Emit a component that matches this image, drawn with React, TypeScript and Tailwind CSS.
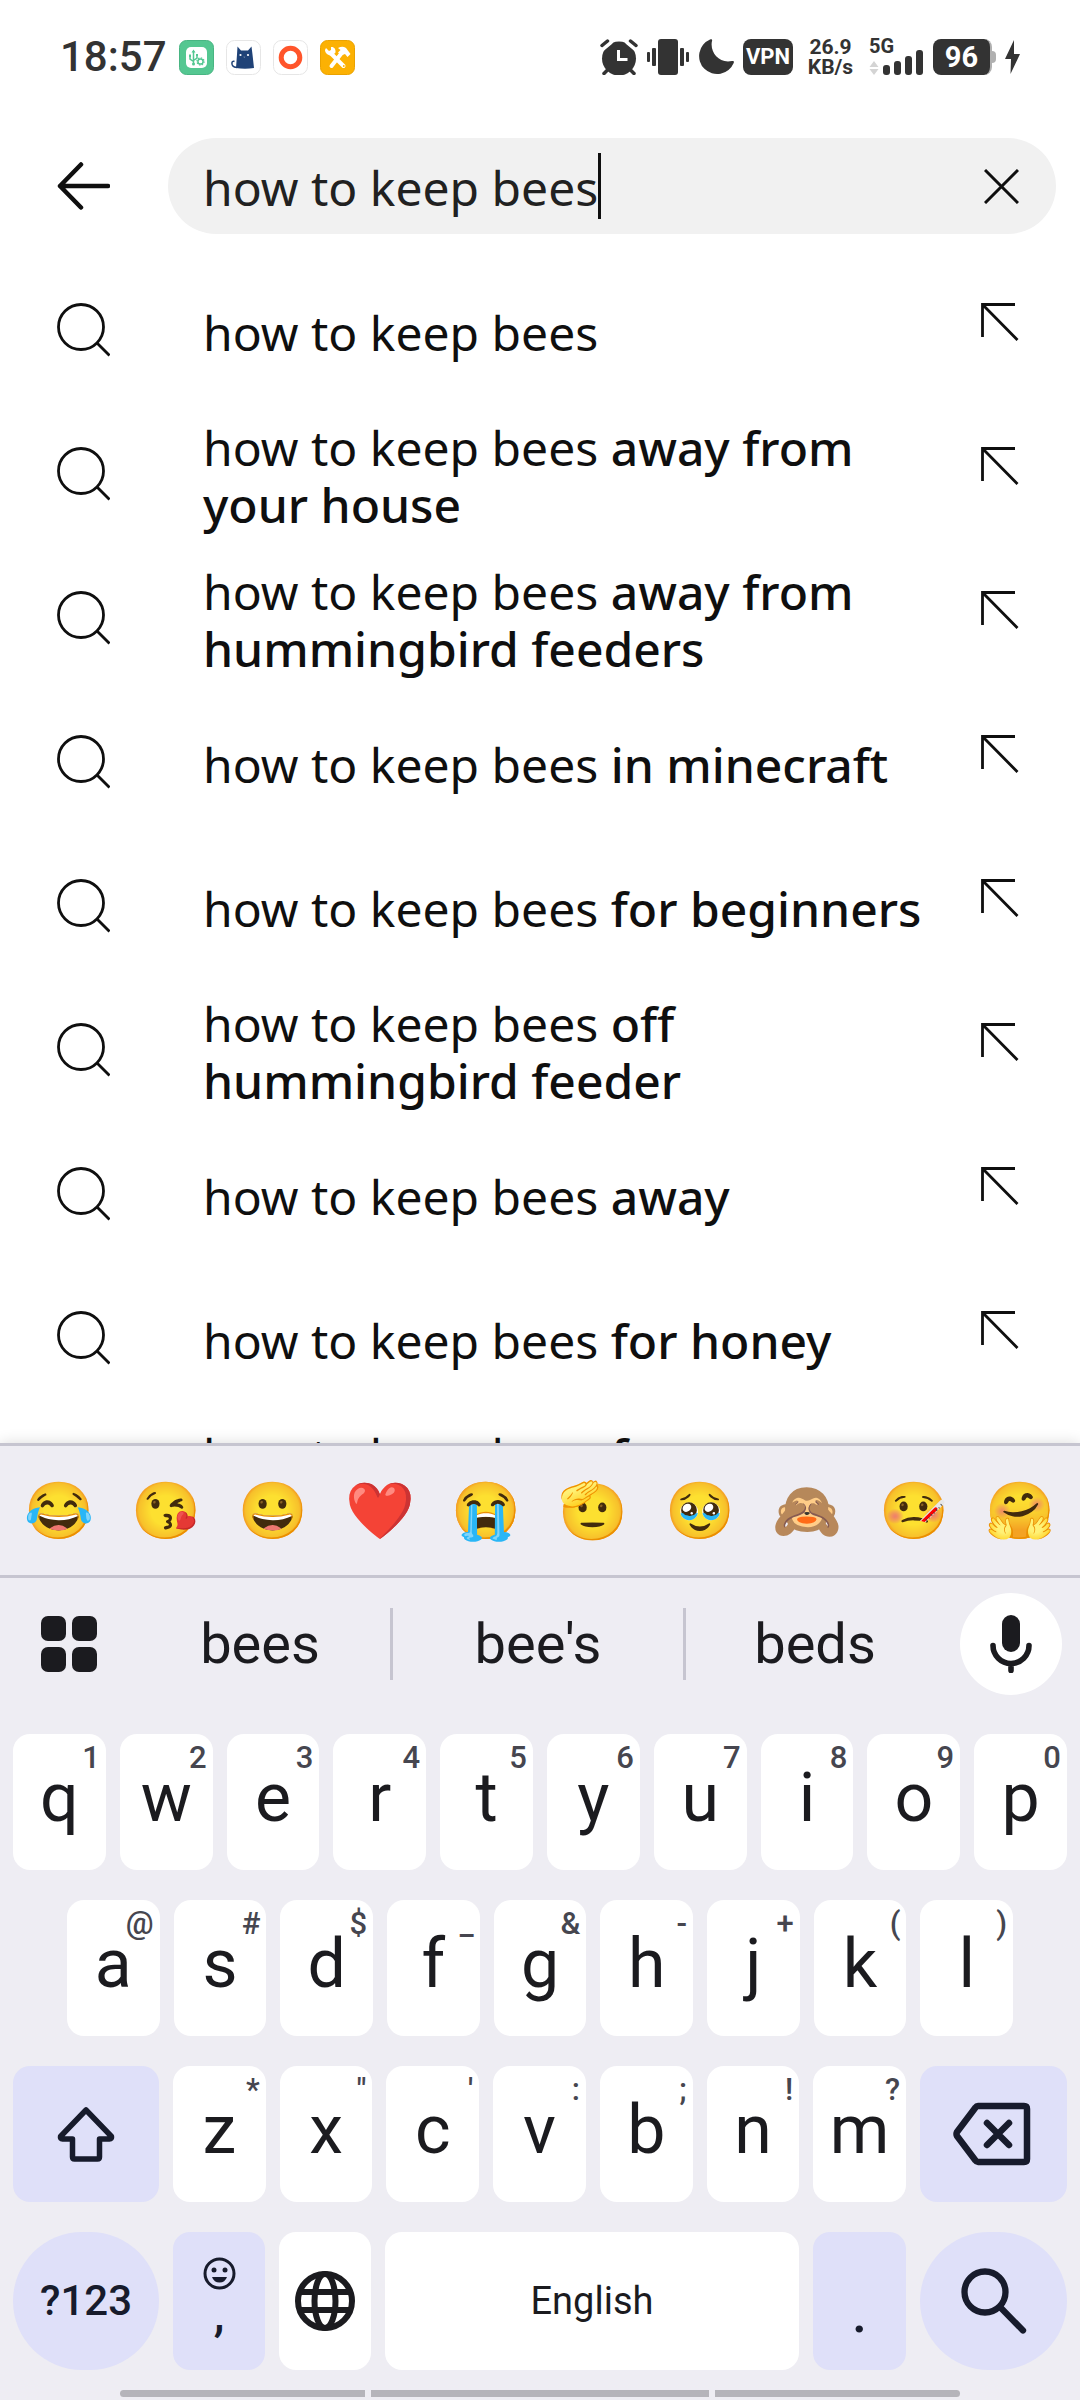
import React from "react";

const suggestions: { rest: string }[] = [
  { rest: "" },
  { rest: "away from your house" },
  { rest: "away from hummingbird feeders" },
  { rest: "in minecraft" },
  { rest: "for beginners" },
  { rest: "off hummingbird feeder" },
  { rest: "away" },
  { rest: "for honey" },
  { rest: "from hummingbird feeders" },
];

const emojis = ["😂", "😘", "😀", "❤️", "😭", "🫡", "🥹", "🙈", "🤒", "🤗"];

const row1 = [["q", "1"], ["w", "2"], ["e", "3"], ["r", "4"], ["t", "5"], ["y", "6"], ["u", "7"], ["i", "8"], ["o", "9"], ["p", "0"]];
const row2 = [["a", "@"], ["s", "#"], ["d", "$"], ["f", "_"], ["g", "&"], ["h", "-"], ["j", "+"], ["k", "("], ["l", ")"]];
const row3 = [["z", "*"], ["x", '"'], ["c", "'"], ["v", ":"], ["b", ";"], ["n", "!"], ["m", "?"]];

function StatusBar() {
  return (
    <header className="flex h-[114px] shrink-0 items-center justify-between pl-[60px] pr-[60px] font-[Roboto,sans-serif] text-[#333]">
      <div className="flex items-center gap-3">
        <span className="text-[42px] leading-[48px] font-medium">18:57</span>
        <svg width="35" height="35" viewBox="0 0 35 35" aria-hidden="true">
          <rect x="0.5" y="0.5" width="34" height="34" rx="7" fill="#54c791" stroke="#48b582" />
          <rect x="7" y="7" width="21" height="21" rx="5" fill="#fff" />
          <g fill="none" stroke="#54c791" strokeWidth="1.5">
            <path d="M14.500 11v13M11 16v3l3.500 2.500M18 15v3l-3.500 2.500" />
            <circle cx="21.500" cy="21.500" r="2.600" />
          </g>
          <path d="M14.500 9.500l2 3h-4zM10 14.500h2v2.500h-2zM17 14h2v2h-2z" fill="#54c791" />
          <circle cx="14.500" cy="24" r="1.500" fill="#54c791" />
          <circle cx="21.500" cy="21.500" r="3.600" fill="none" stroke="#54c791" strokeWidth="1.200" strokeDasharray="1.400 1.400" />
        </svg>
        <svg width="35" height="35" viewBox="0 0 35 35" aria-hidden="true">
          <rect x="0.5" y="0.5" width="34" height="34" rx="8" fill="#fff" stroke="#e6e6e6" />
          <path d="M11.500 6.500l3.500 4h7l3.500-4 1 8 1.500 13.500q-9 1.500-18 0l1-13.500z" fill="#1f4277" />
          <path d="M11 27.500c-4.500 0-5.500-3-5-5 .3-1.200 1.500-1.500 2.500-1" fill="none" stroke="#1f4277" strokeWidth="1.500" />
          <circle cx="14.500" cy="15" r="1.100" fill="#fff" />
          <circle cx="22" cy="15" r="1.100" fill="#fff" />
          <path d="M17.300 16.800h2l-1 1z" fill="#fff" opacity="0.6" />
        </svg>
        <svg width="35" height="35" viewBox="0 0 35 35" aria-hidden="true">
          <rect x="0.5" y="0.5" width="34" height="34" rx="8" fill="#fff" stroke="#e6e6e6" />
          <circle cx="17.500" cy="17.500" r="9.300" fill="none" stroke="#ff552b" strokeWidth="5" />
        </svg>
        <svg width="35" height="35" viewBox="0 0 35 35" aria-hidden="true">
          <rect x="0.5" y="0.5" width="34" height="34" rx="7" fill="#fcb103" stroke="#eaa200" />
          <g stroke="#fff" strokeLinecap="round" fill="none">
            <path d="M11 13.500L23.500 26" strokeWidth="4" />
            <path d="M22.500 12L11.500 26" strokeWidth="4" />
          </g>
          <path d="M6 8l3 3 2-1V7c3-.5 5 2 4.500 5.500l-3 3C8 16 5 13 5 10z" fill="#fff" />
          <path d="M18 8c4-2 7.500-1.500 9.500 2l3 4-3 3-2.500-3-4 1.500-3-3 2.500-2.500z" fill="#fff" />
          <circle cx="23.800" cy="26" r="0.900" fill="#fcb103" />
        </svg>
      </div>
      <div className="flex items-center gap-[9px]">
        <svg width="38" height="36" viewBox="0 0 38 36" aria-label="Alarm set" role="img">
          <circle cx="19" cy="19.500" r="17" fill="#333" />
          <g strokeLinecap="round">
            <path d="M1 9.500L10 2M37 9.500L28 2" stroke="#fff" strokeWidth="7" />
            <path d="M2 6.500L7.500 2M36 6.500L30.500 2M4 34.500l4-4M34 34.500l-4-4" stroke="#333" strokeWidth="3.500" />
          </g>
          <path d="M18.500 11v9.500h9" fill="none" stroke="#fff" strokeWidth="3" />
        </svg>
        <svg width="42" height="36" viewBox="0 0 42 36" fill="#333" aria-label="Vibrate" role="img">
          <rect x="11" y="0" width="20" height="36" rx="3" />
          <rect x="5" y="9" width="4" height="18" rx="1" />
          <rect x="0" y="13" width="3" height="10" rx="1" />
          <rect x="33" y="9" width="4" height="18" rx="1" />
          <rect x="39" y="13" width="3" height="10" rx="1" />
        </svg>
        <svg width="36" height="36" viewBox="0 0 36 36" fill="#333" aria-label="Do not disturb" role="img">
          <path d="M12 .5c2-.8 2.500 0 2 1.500C11.500 13 21 25 34 22c1.800-.4 2.300.3 1.700 2A18 18 0 1 1 12 .5z" />
        </svg>
        <span className="flex h-9 w-[50px] items-center justify-center rounded-lg bg-[#333] text-[22px] leading-none font-bold text-white">VPN</span>
        <span className="ml-[7px] flex w-[43px] flex-col items-center text-[21px] leading-[20px] font-bold">
          <span>26.9</span>
          <span>KB/s</span>
        </span>
        <span className="ml-2 flex h-9 w-[55px] flex-col">
          <span className="text-[20px] leading-[14px] font-bold">5G</span>
          <svg className="-mt-1" width="55" height="26" viewBox="0 0 55 26" aria-label="Signal strength" role="img">
            <path d="M5 12l4.500 6h-9zM5 26l4.500-6h-9z" fill="#d4d4d4" />
            <g fill="#333">
              <rect x="14" y="16" width="7" height="10" rx="3" />
              <rect x="25" y="12" width="7" height="14" rx="3" />
              <rect x="36" y="7" width="7" height="19" rx="3" />
              <rect x="47" y="1" width="7" height="25" rx="3" />
            </g>
          </svg>
        </span>
        <span className="flex items-center">
          <span className="flex h-9 w-[59px] items-center justify-center rounded-lg border-r-2 border-[#b0b0b0] bg-[#333] text-[29px] leading-none font-bold text-white">96</span>
          <span className="h-3 w-1 rounded-r-sm bg-[#b0b0b0]" />
        </span>
        <svg width="15" height="34" viewBox="0 0 15 34" fill="#333" aria-label="Charging" role="img">
          <path d="M9 0L0 19h6l-.500 15L15 14H9z" />
        </svg>
      </div>
    </header>
  );
}

function SearchBar() {
  return (
    <div className="mt-6 mb-[26px] flex shrink-0 items-center pr-6 pl-[57px]">
      <button aria-label="Back" className="mr-[58px] shrink-0">
        <svg width="53" height="48" viewBox="0 0 53 48" fill="none" stroke="#0f0f0f" strokeWidth="4.500" strokeLinecap="round" strokeLinejoin="round">
          <path d="M24 2.500L3 24l21 21.500M3 24h48" />
        </svg>
      </button>
      <div className="flex h-24 min-w-0 flex-1 items-center rounded-full bg-[#f1f1f1] pr-[37px] pl-[35px]">
        <label className="flex min-w-0 flex-1 items-center">
          <span className="sr-only">Search</span>
          <input className="field-sizing-content min-w-0 bg-transparent pt-1 text-[48px] leading-[72px] text-[#212121] caret-transparent outline-none" defaultValue="how to keep bees" />
          <span className="h-[66px] w-[3px] shrink-0 bg-[#0f0f0f]" />
        </label>
        <button aria-label="Clear search">
          <svg width="35" height="35" viewBox="0 0 35 35" fill="none" stroke="#0f0f0f" strokeWidth="3">
            <path d="M1 1l33 33M34 1L1 34" />
          </svg>
        </button>
      </div>
    </div>
  );
}

function Suggestion({ rest }: { rest: string }) {
  return (
    <li className="flex min-h-36 shrink-0 items-start pr-[61px] pl-[57px]">
      <svg className="mt-[43px] mr-[93px] shrink-0" width="53" height="54" viewBox="0 0 53 54" fill="none" stroke="#0f0f0f" strokeWidth="2.800" aria-hidden="true">
        <circle cx="24" cy="24" r="22.500" />
        <path d="M40 40l12.500 12.500" />
      </svg>
      <a href="#" className="min-w-0 flex-1 self-center pr-[45px] text-[48px] leading-[57px]">
        how to keep bees <span className="font-medium">{rest}</span>
      </a>
      <button aria-label="Use this suggestion" className="mt-[43px] shrink-0">
        <svg width="38" height="38" viewBox="0 0 38 38" fill="none" stroke="#0f0f0f" strokeWidth="2.800">
          <path d="M34 1.500H1.500V34M1.500 1.500l35 35.500" />
        </svg>
      </button>
    </li>
  );
}

function Key({ label, hint }: { label: string; hint: string }) {
  return (
    <button className="relative flex h-[136px] min-w-0 flex-1 items-center justify-center rounded-[17px] bg-white pb-2 text-[68px] leading-none">
      {label}
      <span className="absolute top-2 right-[6px] text-[31px] leading-none font-medium text-[#46464f]">{hint}</span>
    </button>
  );
}

function Keyboard() {
  return (
    <section aria-label="Keyboard" className="relative shrink-0 border-t-[3px] border-[#c6c5d0] bg-[#eeedf3] font-[Roboto,sans-serif] text-[#1b1b1f] shadow-[0_0_14px_rgba(0,0,0,0.14)]">
      <div className="grid h-[132px] grid-cols-10 items-center border-b-[3px] border-[#c6c5d0] px-[6px]">
        {emojis.map((e) => (
          <button key={e} className="flex items-center justify-center font-['Noto_Color_Emoji',sans-serif] text-[56px] leading-none">{e}</button>
        ))}
      </div>
      <div className="flex h-[132px] items-center">
        <button aria-label="Toolbar" className="flex w-[130px] shrink-0 pl-[41px]">
          <svg width="56" height="56" viewBox="0 0 56 56" fill="#1b1b1f">
            <rect width="25" height="25" rx="7" />
            <rect x="31" width="25" height="25" rx="7" />
            <rect y="31" width="25" height="25" rx="7" />
            <rect x="31" y="31" width="25" height="25" rx="7" />
          </svg>
        </button>
        <div className="grid h-[72px] min-w-0 flex-1 grid-cols-[260fr_296fr_258fr] text-[56px] leading-none">
          <button>bees</button>
          <button className="border-x-[3px] border-[#c6c5d0]">bee's</button>
          <button>beds</button>
        </div>
        <button aria-label="Voice input" className="mr-[18px] ml-4 flex size-[102px] shrink-0 items-center justify-center rounded-full bg-white">
          <svg width="42" height="58" viewBox="0 0 42 58">
            <rect x="12" y="0" width="18" height="37" rx="9" fill="#1b1b1f" />
            <path d="M3 30.500a18 18 0 0 0 36 0M21 48.500v7" fill="none" stroke="#1b1b1f" strokeWidth="5.600" strokeLinecap="round" />
          </svg>
        </button>
      </div>
      <div className="flex flex-col gap-[30px] px-[13px] pt-6">
        <div className="flex gap-[14px]">
          {row1.map(([l, h]) => <Key key={l} label={l} hint={h} />)}
        </div>
        <div className="flex gap-[14px] px-[54px]">
          {row2.map(([l, h]) => <Key key={l} label={l} hint={h} />)}
        </div>
        <div className="flex gap-[14px]">
          <button aria-label="Shift" className="flex w-[146px] shrink-0 items-center justify-center rounded-[17px] bg-[#dfe0f9]">
            <svg width="58" height="56" viewBox="0 0 58 56" fill="none" stroke="#171b2c" strokeWidth="5.500" strokeLinejoin="round">
              <path d="M29 4L3.500 30.500q-.500 2.500 2 2.500H15.500V51q0 2 2 2h23q2 0 2-2V33h10q2.500 0 2-2.500z" />
            </svg>
          </button>
          {row3.map(([l, h]) => <Key key={l} label={l} hint={h} />)}
          <button aria-label="Backspace" className="flex w-[147px] shrink-0 items-center justify-center rounded-[17px] bg-[#dfe0f9] pr-1">
            <svg width="78" height="64" viewBox="0 0 78 64" fill="none" stroke="#171b2c" strokeWidth="6.500" strokeLinecap="round" strokeLinejoin="round">
              <path d="M25 4H71q3 0 3 3V57q0 3-3 3H25q-1.500 0-2.500-1.500L4 34q-1-2 0-4L22.500 5.500Q23.500 4 25 4z" />
              <path d="M34 21l22 22M56 21l-22 22" />
            </svg>
          </button>
        </div>
        <div className="flex h-[138px] gap-[14px]">
          <button className="w-[146px] shrink-0 rounded-full bg-[#dfe0f9] text-[42px] leading-none font-medium text-[#171b2c]">?123</button>
          <button aria-label="Comma and emoji" className="flex w-[92px] shrink-0 flex-col items-center rounded-[17px] bg-[#dfe0f9] pt-[25px] text-[48px] leading-[48px] font-medium text-[#171b2c]">
            <svg width="33" height="33" viewBox="0 0 33 33" fill="none" stroke="#171b2c" strokeWidth="3">
              <circle cx="16.500" cy="16.500" r="14.500" />
              <circle cx="11" cy="13" r="2.500" fill="#171b2c" stroke="none" />
              <circle cx="22" cy="13" r="2.500" fill="#171b2c" stroke="none" />
              <path d="M9 20h15q-2 5.500-7.500 5.500T9 20z" fill="#171b2c" stroke="none" />
            </svg>
            ,
          </button>
          <button aria-label="Change language" className="flex w-[92px] shrink-0 items-center justify-center rounded-[17px] bg-white">
            <svg width="60" height="60" viewBox="0 0 60 60" fill="none" stroke="#1b1b1f" strokeWidth="6">
              <circle cx="30" cy="30" r="27" />
              <ellipse cx="30" cy="30" rx="10.500" ry="27" />
              <path d="M5 21h50M5 39h50" />
            </svg>
          </button>
          <button className="min-w-0 flex-1 rounded-[17px] bg-white text-[38px] leading-none">English</button>
          <button aria-label="Period" className="w-[93px] shrink-0 rounded-[17px] bg-[#dfe0f9] pt-[26px] text-[54px] leading-none font-medium text-[#171b2c]">.</button>
          <button aria-label="Search" className="flex w-[147px] shrink-0 items-center justify-center rounded-full bg-[#dfe0f9]">
            <svg width="66" height="66" viewBox="0 0 66 66" fill="none" stroke="#171b2c" strokeWidth="6.300" strokeLinecap="round">
              <circle cx="24" cy="24" r="20.500" />
              <path d="M40 40l22 22.500" />
            </svg>
          </button>
        </div>
      </div>
      <div className="mt-5 mb-[3px] flex h-[7px] gap-[6px] px-[120px]" aria-hidden="true">
        <span className="flex-[245] rounded-l-full bg-[#b5b4ba]" />
        <span className="flex-[338] bg-[#b5b4ba]" />
        <span className="flex-[245] rounded-r-full bg-[#b5b4ba]" />
      </div>
    </section>
  );
}

export default function App() {
  return (
    <div className="flex h-screen flex-col overflow-hidden bg-white font-['Noto_Sans',sans-serif] text-[#0f0f0f]">
      <StatusBar />
      <SearchBar />
      <ul className="flex min-h-0 flex-1 flex-col overflow-hidden">
        {suggestions.map((s) => <Suggestion key={s.rest} rest={s.rest} />)}
      </ul>
      <Keyboard />
    </div>
  );
}
